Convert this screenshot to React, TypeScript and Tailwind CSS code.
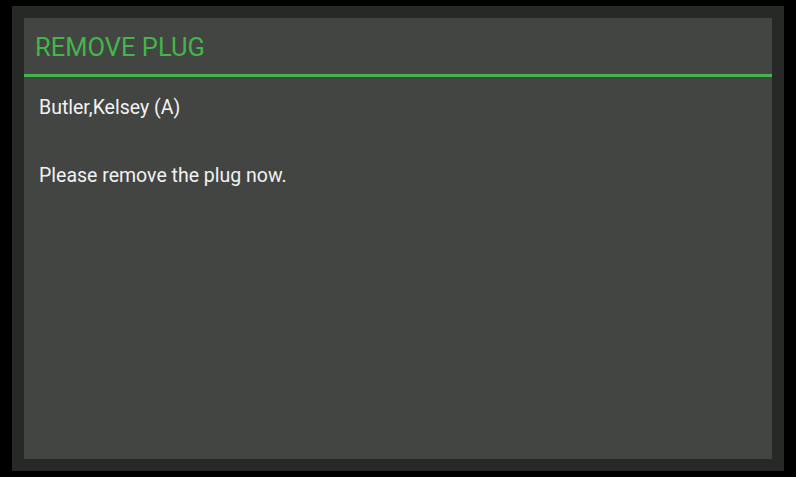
export default function App() {
  return (
    <div className="h-[477px] w-[796px] bg-black px-[12px] py-[6px]" style={{ fontFamily: 'Roboto, "Noto Sans", sans-serif' }}>
      <div className="flex h-full flex-col bg-[#272926] p-[12px]">
        <div className="flex flex-1 flex-col bg-[#434542]">
          <div className="box-content h-[39px] border-b-[3px] border-[#43b54a] pl-[11px] pt-[17px]">
            <span className="text-[25.5px] leading-none text-[#43b54a]">REMOVE PLUG</span>
          </div>
          <div className="flex flex-col pl-[15px] pt-[20px] text-[19.5px] leading-[22px] text-[#f2f2f2]">
            <div>Butler,Kelsey (A)</div>
            <div className="mt-[46px]">Please remove the plug now.</div>
          </div>
        </div>
      </div>
    </div>
  );
}
